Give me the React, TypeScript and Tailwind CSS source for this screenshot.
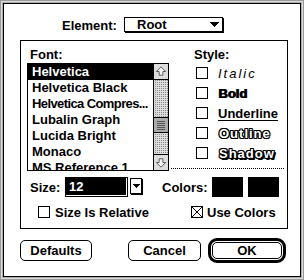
import React from "react";

function Box({ checked = false }: { checked?: boolean }) {
  return (
    <div className="w-[12px] h-[12px] border border-black bg-white shrink-0 flex">
      {checked && (
        <svg width="10" height="10" viewBox="0 0 10 10" shapeRendering="crispEdges">
          {[0, 1, 2, 3, 4, 5, 6, 7, 8, 9].map((i) => (
            <React.Fragment key={i}>
              <rect x={i} y={i} width="1" height="1" fill="#000" />
              <rect x={9 - i} y={i} width="1" height="1" fill="#000" />
            </React.Fragment>
          ))}
        </svg>
      )}
    </div>
  );
}

function Tri({ w }: { w: number }) {
  const rows = Math.ceil(w / 2);
  return (
    <svg width={w} height={rows} shapeRendering="crispEdges">
      {Array.from({ length: rows }).map((_, i) => (
        <rect key={i} x={i} y={i} width={w - 2 * i} height="1" fill="#000" />
      ))}
    </svg>
  );
}

function Arrow({ down = false }: { down?: boolean }) {
  return (
    <svg width="15" height="15" viewBox="0 0 15 15" className={down ? "rotate-180" : ""}>
      <polygon
        points="7.5,2.5 12.5,7.5 9.5,7.5 9.5,11.5 5.5,11.5 5.5,7.5 2.5,7.5"
        fill="#f4f4f4"
        stroke="#555"
        strokeWidth="1"
      />
    </svg>
  );
}

const fonts = [
  "Helvetica",
  "Helvetica Black",
  "Helvetica Compres...",
  "Lubalin Graph",
  "Lucida Bright",
  "Monaco",
  "MS Reference 1",
];

export default function App() {
  return (
    <div className="w-[304px] h-[280px] border border-[#999] font-['Liberation_Sans',Arial,sans-serif] text-[13px] font-bold text-black leading-[15px]">
      <div className="h-full border border-[#dddddd]">
        <div className="h-full border border-[#aaaaaa]">
          <div className="h-full border border-black bg-white flex flex-col">
            {/* Element row */}
            <div className="mt-[13px] h-[16px] pl-[58px] flex items-center">
              <span className="w-[62px]">Element:</span>
              <div className="w-[100px] h-[16px] pr-px pb-px">
                <div className="h-[15px] border border-black bg-white shadow-[1px_1px_0_#000] flex items-center pl-[12px] pr-[3px]">
                  <span className="flex-1">Root</span>
                  <Tri w={9} />
                </div>
              </div>
            </div>

            {/* Group box */}
            <div className="mt-[7px] ml-[16px] w-[268px] h-[189px] border border-black flex flex-col">
              <div className="flex">
                <div className="ml-[6px] flex flex-col">
                  <div className="mt-[6px] h-[15px] pl-[3px]">Font:</div>
                  <div className="mt-px w-[142px] h-[108px] border border-black flex">
                    <div className="flex-1 flex flex-col overflow-hidden">
                      {fonts.map((f, i) => (
                        <div
                          key={f}
                          className={
                            i === 0
                              ? "h-[16px] shrink-0 leading-[16px] pl-[4px] whitespace-nowrap bg-black text-white"
                              : i === 2
                              ? "h-[16px] shrink-0 leading-[16px] pl-[4px] whitespace-nowrap tracking-[-0.6px]"
                              : "h-[16px] shrink-0 leading-[16px] pl-[4px] whitespace-nowrap"
                          }
                        >
                          {f}
                        </div>
                      ))}
                    </div>
                    <div className="w-[15px] border-l border-black flex flex-col">
                      <div className="h-[16px] border-b border-black bg-[#dddddd] flex items-center justify-center">
                        <Arrow />
                      </div>
                      <div className="flex-1 flex flex-col [background-image:conic-gradient(#888_0_25%,#dddddd_0)] [background-size:2px_2px]">
                        <div className="h-[37px]" />
                        <div className="h-[16px] border-y border-black bg-[#aaaaaa] flex items-center justify-center">
                          <svg width="8" height="9" shapeRendering="crispEdges">
                            {[0, 2, 4, 6, 8].map((y) => (
                              <rect key={y} x="0" y={y} width="8" height="1" fill="#555" />
                            ))}
                          </svg>
                        </div>
                      </div>
                      <div className="h-[16px] border-t border-black bg-[#dddddd] flex items-center justify-center">
                        <Arrow down />
                      </div>
                    </div>
                  </div>
                </div>

                <div className="ml-[2px] w-[113px] flex flex-col">
                  <div className="mt-[6px] h-[15px] pl-[23px]">Style:</div>
                  <div className="mt-px flex flex-col">
                    <div className="h-[20px] pl-[25px] flex items-center">
                      <Box />
                      <span className="ml-[10px] italic font-normal tracking-[2px]">Italic</span>
                    </div>
                    <div className="h-[20px] pl-[25px] flex items-center">
                      <Box />
                      <span className="ml-[10px] font-black [text-shadow:1px_0_0_#000]">Bold</span>
                    </div>
                    <div className="h-[20px] pl-[25px] flex items-center">
                      <Box />
                      <span className="ml-[10px] underline underline-offset-[2px]">Underline</span>
                    </div>
                    <div className="h-[20px] pl-[25px] flex items-center">
                      <Box />
                      <span className="ml-[11px] text-white tracking-[1px] [text-shadow:1px_0_0_#000,-1px_0_0_#000,0_1px_0_#000,0_-1px_0_#000,1px_1px_0_#000,-1px_-1px_0_#000,1px_-1px_0_#000,-1px_1px_0_#000]">
                        Outline
                      </span>
                    </div>
                    <div className="h-[20px] pl-[25px] flex items-center">
                      <Box />
                      <span className="ml-[11px] text-white tracking-[1px] [text-shadow:1px_0_0_#000,-1px_0_0_#000,0_1px_0_#000,0_-1px_0_#000,1px_1px_0_#000,-1px_-1px_0_#000,1px_-1px_0_#000,-1px_1px_0_#000,2px_2px_0_#000,2px_1px_0_#000,1px_2px_0_#000]">
                        Shadow
                      </span>
                    </div>
                  </div>
                  <div className="mt-[5px] h-px w-[113px] [background-image:linear-gradient(to_right,#000_50%,transparent_50%)] [background-size:2px_1px]" />
                </div>
              </div>

              {/* Size row */}
              <div className="mt-[6px] h-[20px] flex items-center">
                <span className="ml-[9px] w-[35px]">Size:</span>
                <div className="w-[63px] h-[20px] border border-black bg-white pr-px pb-px flex">
                  <div className="flex-1 bg-black text-white pl-[3px] flex items-center">12</div>
                </div>
                <div className="ml-[2px] w-[13px] h-[17px] pr-px pb-px self-start mt-px">
                  <div className="h-full border border-black bg-white shadow-[1px_1px_0_#000] flex items-center justify-center">
                    <Tri w={7} />
                  </div>
                </div>
                <span className="ml-[19px] w-[50px]">Colors:</span>
                <div className="w-[31px] h-[20px] bg-black" />
                <div className="ml-[5px] w-[31px] h-[20px] bg-black" />
              </div>

              {/* Checkbox row */}
              <div className="mt-[9px] h-[12px] flex items-center">
                <div className="ml-[17px] w-[153px] flex items-center">
                  <Box />
                  <span className="ml-[5px] whitespace-nowrap">Size Is Relative</span>
                </div>
                <Box checked />
                <span className="ml-[4px] whitespace-nowrap">Use Colors</span>
              </div>
            </div>

            {/* Buttons */}
            <div className="mt-[9px] h-[25px] flex items-center">
              <div className="ml-[16px] w-[72px] h-[21px] border border-black rounded-[5px] flex items-center justify-center">
                Defaults
              </div>
              <div className="ml-[36px] w-[73px] h-[21px] border border-black rounded-[5px] flex items-center justify-center">
                Cancel
              </div>
              <div className="ml-[7px] w-[78px] h-[25px] border-[3px] border-black rounded-[9px] p-px flex">
                <div className="flex-1 border border-black rounded-[5px] flex items-center justify-center">
                  OK
                </div>
              </div>
            </div>
          </div>
        </div>
      </div>
    </div>
  );
}
